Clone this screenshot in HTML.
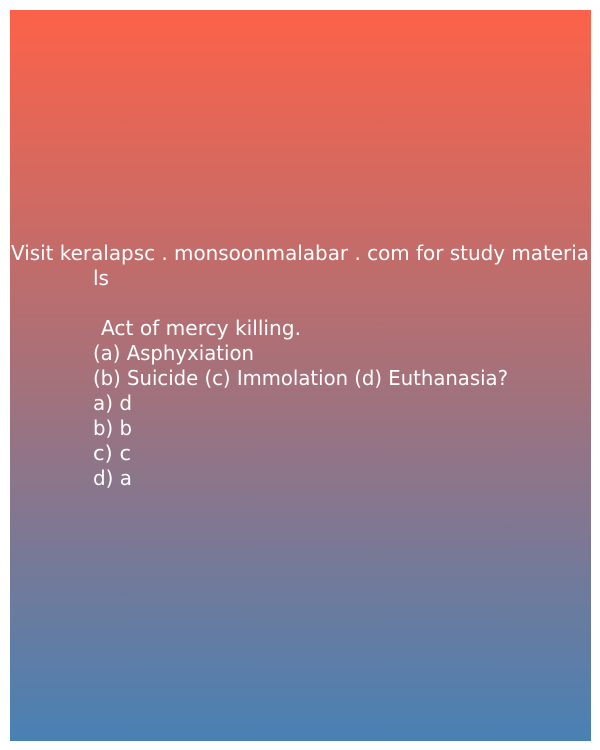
<!DOCTYPE html>
<html><head><style>
html,body{margin:0;padding:0;background:#fff;width:600px;height:750px;overflow:hidden}
</style></head><body>
<svg width="600" height="750" xmlns="http://www.w3.org/2000/svg">
<defs><linearGradient id="g" x1="0" y1="0" x2="0" y2="1">
<stop offset="0" stop-color="#fd6249"/><stop offset="0.5" stop-color="#a6717a"/><stop offset="1" stop-color="#4981b4"/>
</linearGradient></defs>
<rect x="10" y="10" width="581" height="731" fill="url(#g)"/>
<g fill="#fff" font-family="DejaVu Sans, Liberation Sans, sans-serif" font-size="20">
<text x="11" y="260" textLength="578" lengthAdjust="spacingAndGlyphs">Visit keralapsc . monsoonmalabar . com for study materia</text>
<text x="93" y="285" textLength="16" lengthAdjust="spacingAndGlyphs">ls</text>
<text x="101" y="335" textLength="200" lengthAdjust="spacingAndGlyphs">Act of mercy killing.</text>
<text x="93" y="360" textLength="161" lengthAdjust="spacingAndGlyphs">(a) Asphyxiation</text>
<text x="93" y="385" textLength="415" lengthAdjust="spacingAndGlyphs">(b) Suicide (c) Immolation (d) Euthanasia?</text>
<text x="93" y="410" textLength="39" lengthAdjust="spacingAndGlyphs">a) d</text>
<text x="93" y="435" textLength="39" lengthAdjust="spacingAndGlyphs">b) b</text>
<text x="93" y="460" textLength="38" lengthAdjust="spacingAndGlyphs">c) c</text>
<text x="93" y="485" textLength="39" lengthAdjust="spacingAndGlyphs">d) a</text>
</g>
</svg>
</body></html>
